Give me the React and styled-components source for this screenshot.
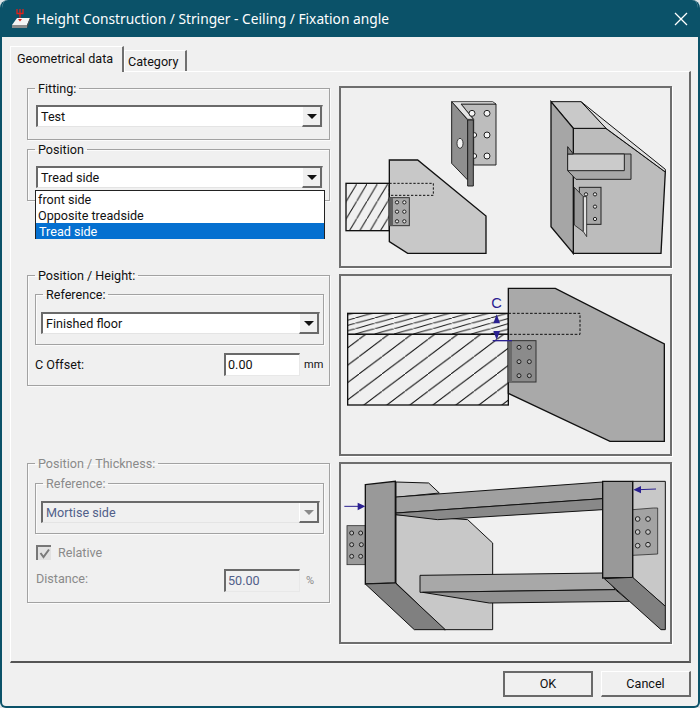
import styled, { createGlobalStyle } from "styled-components";

const GlobalStyle = createGlobalStyle`
  html, body, #root {
    margin: 0;
    padding: 0;
    height: 100%;
    background: #dfe5e8;
  }
  * {
    box-sizing: border-box;
  }
`;

const Window = styled.div`
  width: 700px;
  height: 708px;
  display: flex;
  flex-direction: column;
  background: #f0f0f0;
  border: 2px solid #0b5269;
  border-top: 0;
  border-radius: 8px 8px 6px 6px;
  overflow: hidden;
  font-family: Roboto, "Noto Sans", sans-serif;
  font-size: 12.6px;
  line-height: 18px;
  color: #111;
`;

const TitleBar = styled.div`
  height: 37px;
  margin: 0 -2px;
  padding: 0 12px 0 12px;
  display: flex;
  align-items: center;
  background: #0b5269;
  color: #fff;
  font-family: "Noto Sans", sans-serif;
  font-size: 13.75px;
`;

const TitleText = styled.div`
  margin-left: 6px;
  flex: 1;
`;

const Body = styled.div`
  flex: 1;
  display: flex;
  flex-direction: column;
  padding: 9px 7px 0 8px;
`;

const TabRow = styled.div`
  height: 25px;
  display: flex;
  align-items: flex-end;
`;

const Tab = styled.div`
  height: ${(props) => (props.active ? "26px" : "21px")};
  width: ${(props) => props.w}px;
  margin-bottom: ${(props) => (props.active ? "-1px" : "0")};
  padding: ${(props) => (props.active ? "3px 0 0 6px" : "2px 0 0 3px")};
  background: #f0f0f0;
  border-top: 1px solid #fff;
  border-left: 1px solid #fff;
  border-right: 2px solid #707070;
  white-space: nowrap;
  position: relative;
  z-index: ${(props) => (props.active ? 2 : 1)};
`;

const TabPanel = styled.div`
  height: 592px;
  display: flex;
  gap: 9px;
  padding: 7px 0 0 16px;
  border-top: 1px solid #fff;
  border-left: 1px solid #fff;
  border-right: 2px solid #6a6a6a;
  border-bottom: 2px solid #555;
`;

const LeftColumn = styled.div`
  width: 303px;
  display: flex;
  flex-direction: column;
  position: relative;
`;

const RightColumn = styled.div`
  width: 333px;
  margin-top: 7px;
  display: flex;
  flex-direction: column;
  gap: 6px;
`;

const Group = styled.fieldset`
  margin: ${(props) => props.top || 0}px 0 0 0;
  padding: 0 6px 0 8px;
  min-width: 0;
  height: ${(props) => props.h}px;
  border: 1px solid #a2a2a2;
  box-shadow: inset 1px 1px 0 #fbfbfb, 1px 1px 0 #fbfbfb;
  color: ${(props) => (props.disabled ? "#8a8a8a" : "inherit")};
`;

const InnerGroup = styled(Group)`
  margin: ${(props) => props.top}px -1px 0 -1px;
  padding: 0 3px 0 5px;
`;

const Legend = styled.legend`
  margin-left: ${(props) => (props.inner ? 2 : -1)}px;
  padding: 2px 3px 0;
  line-height: 16px;
  color: inherit;
`;

const Combo = styled.div`
  height: 22px;
  margin-top: ${(props) => props.mt}px;
  display: flex;
  justify-content: space-between;
  background: ${(props) => (props.disabled ? "#f0f0f0" : "#fff")};
  border-top: 2px solid #6a6a6a;
  border-left: 2px solid #6a6a6a;
  border-right: 1px solid #ececec;
  border-bottom: 1px solid #e4e4e4;
  padding-left: 3px;
  color: ${(props) => (props.disabled ? "#51608a" : "#111")};
`;

const ComboText = styled.div`
  line-height: 20px;
`;

const ComboButton = styled.div`
  width: 20px;
  height: 20px;
  display: flex;
  align-items: center;
  justify-content: center;
  background: #f0f0f0;
  border-right: 2px solid #6a6a6a;
  border-bottom: 2px solid #6a6a6a;
  border-left: 1px solid #fff;
`;

const Arrow = styled.div`
  width: 0;
  height: 0;
  border-left: 5px solid transparent;
  border-right: 5px solid transparent;
  border-top: 5px solid ${(props) => (props.disabled ? "#8a8a8a" : "#111")};
`;

const DropList = styled.div`
  position: absolute;
  top: 111px;
  left: 8px;
  width: 290px;
  height: 49px;
  background: #fff;
  border: 1px solid #222;
  z-index: 3;
  line-height: 17px;
`;

const DropItem = styled.div`
  padding-left: ${(props) => (props.selected ? 3 : 2)}px;
  height: 16px;
  background: ${(props) => (props.selected ? "#0570d0" : "transparent")};
  color: ${(props) => (props.selected ? "#fff" : "#111")};
`;

const FieldRow = styled.div`
  margin-top: ${(props) => props.mt}px;
  display: flex;
  align-items: center;
  height: 23px;
`;

const FieldLabel = styled.div`
  flex: none;
  width: ${(props) => props.w}px;
  margin-left: ${(props) => props.ml || 0}px;
  margin-bottom: ${(props) => props.mb || 0}px;
`;

const NumberInput = styled.div`
  flex: none;
  width: 76px;
  height: 23px;
  padding-left: 2px;
  line-height: 20px;
  background: ${(props) => (props.disabled ? "#f0f0f0" : "#fff")};
  border-top: 2px solid #6a6a6a;
  border-left: 2px solid #6a6a6a;
  border-right: 1px solid #e8e8e8;
  border-bottom: 1px solid #e8e8e8;
  color: ${(props) => (props.disabled ? "#51608a" : "#111")};
`;

const Unit = styled.div`
  flex: none;
  margin-left: ${(props) => props.ml}px;
  font-size: 11px;
`;

const CheckRow = styled.div`
  margin-top: 11px;
  display: flex;
  align-items: center;
  gap: 7px;
  height: 15px;
`;

const CheckBox = styled.div`
  width: 15px;
  height: 15px;
  display: flex;
  align-items: center;
  justify-content: center;
  background: #e2e2e2;
  border-top: 2px solid #777;
  border-left: 2px solid #777;
`;

const Picture = styled.div`
  height: 182px;
  background: #f0f0f0;
  border: 2px solid #6e6e6e;
  box-shadow: 1px 1px 0 #fff;
`;

const Drawing = styled.svg`
  display: block;
  width: 100%;
  height: 100%;
`;

const Footer = styled.div`
  flex: 1;
  display: flex;
  justify-content: flex-end;
  gap: 8px;
  padding: 8px 0 0 0;
`;

const Button = styled.div`
  width: 90px;
  height: 26px;
  display: flex;
  align-items: center;
  justify-content: center;
  background: #f0f0f0;
  border-top: ${(props) => (props.primary ? "2px solid #6a6a6a" : "1px solid #fff")};
  border-left: ${(props) => (props.primary ? "2px solid #6a6a6a" : "1px solid #fff")};
  border-right: 2px solid #6a6a6a;
  border-bottom: 2px solid #6a6a6a;
`;

const Hatch = ({ id, gap, rise }) => (
  <pattern id={id} width={gap} height={rise} patternUnits="userSpaceOnUse">
    <line x1={0} y1={rise} x2={gap} y2={0} stroke="#111" strokeWidth="3" />
  </pattern>
);

const Holes = ({ points, fill = "#e6e6e6", r = 6 }) =>
  points.map(([x, y]) => (
    <circle key={`${x}-${y}`} cx={x} cy={y} r={r} fill={fill} stroke="#222" strokeWidth="3" />
  ));

const TitleIcon = () => (
  <svg width="18" height="20" viewBox="0 0 18 20">
    <path d="M0 16 L5 9 H18 L15 16 Z" fill="#f4f4f4" />
    <path d="M0 16 H15 V19 H0 Z" fill="#8c8c8c" />
    <path d="M15 16 L18 9 V12 L15 19 Z" fill="#4e4e4e" />
    <path d="M5 0 V4.5 H11 V0 M8 0 V9" stroke="#e0201a" strokeWidth="1.3" fill="none" />
    <path d="M6 10 H10 L8 12.5 Z" fill="#e0201a" />
  </svg>
);

const CloseIcon = () => (
  <svg width="14" height="14" viewBox="0 0 14 14">
    <path d="M1 1 L13 13 M13 1 L1 13" stroke="#fff" strokeWidth="1.3" />
  </svg>
);

const TopDrawing = () => (
  <Drawing viewBox="15 24 987 534">
    <defs>
      <Hatch id="hatchA" gap={31} rise={52} />
    </defs>

    {/* loose bracket */}
    <path d="M375 72 H480 V255 H413 V118 Z" fill="#bdbdbd" stroke="#222" strokeWidth="3" />
    <Holes points={[[415, 165], [415, 228]]} fill="#f4f4f4" r={7} />
    <path d="M347 65 H470 L480 72 H375 L412 118 H395 Z" fill="#e4e4e4" stroke="#222" strokeWidth="2.5" />
    <path d="M347 65 L395 120 V300 L347 250 Z" fill="#8f8f8f" stroke="#222" strokeWidth="3" />
    <path d="M395 120 H412 V318 H395 Z" fill="#777" stroke="#222" strokeWidth="3" />
    <Holes points={[[408, 100], [453, 100], [453, 165], [453, 228]]} fill="#f4f4f4" r={9} />
    <ellipse cx="372" cy="190" rx="9" ry="15" fill="#f4f4f4" stroke="#222" strokeWidth="2.5" />

    {/* stringer with tread */}
    <path d="M160 240 H245 L450 408 V520 H215 L160 485 Z" fill="#c8c8c8" stroke="#111" strokeWidth="4" />
    <rect x="30" y="310" width="130" height="142" fill="url(#hatchA)" stroke="#111" strokeWidth="4" />
    <rect x="160" y="310" width="132" height="36" fill="none" stroke="#111" strokeWidth="3" strokeDasharray="7 5" />
    <rect x="160" y="353" width="60" height="84" fill="#a9a9a9" stroke="#333" strokeWidth="3" />
    <rect x="160" y="353" width="11" height="84" fill="#5f5f5f" />
    <Holes points={[[183, 367], [205, 367], [183, 395], [205, 395], [183, 424], [205, 424]]} r={5} />

    {/* stringer seen from the side */}
    <path d="M712 145 H810 L988 275 L975 520 H712 Z" fill="#bcbcbc" stroke="#111" strokeWidth="4" />
    <path d="M735 65 L988 268 V276 L810 145 Z" fill="#e0e0e0" stroke="#111" strokeWidth="3" />
    <path d="M645 65 H735 L810 145 H712 Z" fill="#c9c9c9" stroke="#111" strokeWidth="3" />
    <path d="M645 65 L712 145 V520 L645 440 Z" fill="#a6a6a6" stroke="#111" strokeWidth="4" />
    <path d="M695 222 H885 V298 H720 L695 272 Z" fill="#a8a8a8" stroke="#222" strokeWidth="3" />
    <path d="M695 222 H865 V272 H695 Z" fill="#cbcbcb" stroke="#222" strokeWidth="3" />
    <path d="M695 200 L712 222 H695 Z" fill="#8d8d8d" stroke="#222" strokeWidth="3" />
    <rect x="730" y="322" width="65" height="111" fill="#a8a8a8" stroke="#222" strokeWidth="3" />
    <path d="M715 322 L742 350 V455 L715 435 Z" fill="#999" stroke="#222" strokeWidth="2.5" />
    <path d="M742 350 H752 V470 L742 455 Z" fill="#e0e0e0" stroke="#222" strokeWidth="2.5" />
    <Holes points={[[750, 343], [777, 343], [777, 380], [777, 417]]} r={5} />
  </Drawing>
);

const MiddleDrawing = () => (
  <Drawing viewBox="15 18 987 534">
    <defs>
      <Hatch id="hatchB" gap={69} rise={52} />
      <Hatch id="hatchC" gap={58} rise={16} />
    </defs>

    <path d="M517 55 H658 L985 222 V514 H822 L517 370 Z" fill="#a9a9a9" stroke="#111" strokeWidth="4" />

    <rect x="35" y="193" width="482" height="212" fill="url(#hatchB)" stroke="#111" strokeWidth="4" />
    <rect x="35" y="130" width="482" height="63" fill="url(#hatchC)" stroke="#111" strokeWidth="4" />

    <rect x="517" y="130" width="215" height="63" fill="none" stroke="#111" strokeWidth="3" strokeDasharray="8 5" />

    <rect x="517" y="212" width="83" height="124" fill="#8b8b8b" stroke="#333" strokeWidth="3" />
    <rect x="517" y="212" width="11" height="124" fill="#6a6a6a" />
    <Holes points={[[549, 232], [580, 232], [549, 275], [580, 275], [549, 317], [580, 317]]} fill="#a8a8a8" r={6} />

    <path d="M470 212 H528" stroke="#2a2090" strokeWidth="4" />
    <path d="M482 133 L492 160 H472 Z M482 210 L472 183 H492 Z" fill="#2a2090" />
    <text x="482" y="115" textAnchor="middle" fontSize="44" fill="#2a2090" fontFamily="Liberation Sans, sans-serif">C</text>
  </Drawing>
);

const BottomDrawing = () => (
  <Drawing viewBox="15 18 987 534">
    {/* far stringer */}
    <path d="M180 170 L395 185 L470 255 V515 H325 L180 375 Z" fill="#c8c8c8" stroke="#111" strokeWidth="3" />
    <path d="M180 72 L278 75 L310 105 L180 118 Z" fill="#c8c8c8" stroke="#111" strokeWidth="3" />
    <path d="M890 70 H988 V445 L890 360 Z" fill="#c8c8c8" stroke="#111" strokeWidth="3" />

    {/* upper tread */}
    <path d="M180 117 L800 72 V122 L180 165 Z" fill="#a0a0a0" stroke="#111" strokeWidth="3" />
    <path d="M180 165 L800 122 V155 L305 185 L180 170 Z" fill="#898989" stroke="#111" strokeWidth="3" />

    {/* lower tread */}
    <path d="M252 352 L800 345 L838 395 L252 403 Z" fill="#a8a8a8" stroke="#111" strokeWidth="3" />
    <path d="M260 403 L838 395 L880 430 L460 435 Z" fill="#909090" stroke="#111" strokeWidth="3" />

    {/* left column */}
    <rect x="33" y="203" width="55" height="117" fill="#9a9a9a" stroke="#333" strokeWidth="2.5" />
    <Holes points={[[47, 225], [74, 225], [47, 260], [76, 260], [47, 295], [74, 295]]} fill="#b8b8b8" r={6} />
    <path d="M88 80 L178 70 V375 L88 378 Z" fill="#999" stroke="#111" strokeWidth="4" />
    <path d="M88 378 L178 375 L328 515 H235 Z" fill="#808080" stroke="#111" strokeWidth="3" />

    {/* right column */}
    <path d="M890 155 L952 150 H965 V288 L890 292 Z" fill="#a3a3a3" stroke="#333" strokeWidth="2.5" />
    <Holes points={[[905, 183], [936, 183], [905, 222], [936, 222], [905, 263], [936, 260]]} fill="#c4c4c4" r={7} />
    <path d="M800 70 H890 V358 L800 360 Z" fill="#999" stroke="#111" strokeWidth="4" />
    <path d="M805 362 L890 358 L988 445 V515 H975 Z" fill="#808080" stroke="#111" strokeWidth="3" />

    <path d="M25 145 H70 M960 93 L910 95" stroke="#2a2090" strokeWidth="3" />
    <path d="M88 145 L65 134 V157 Z M892 95 L915 84 V106 Z" fill="#2a2090" />
  </Drawing>
);

const Combobox = ({ value, mt, disabled }) => (
  <Combo mt={mt} disabled={disabled}>
    <ComboText>{value}</ComboText>
    <ComboButton>
      <Arrow disabled={disabled} />
    </ComboButton>
  </Combo>
);

const App = () => {
  return (
    <Window>
      <GlobalStyle />
      <TitleBar>
        <TitleIcon />
        <TitleText>Height Construction / Stringer - Ceiling / Fixation angle</TitleText>
        <CloseIcon />
      </TitleBar>

      <Body>
        <TabRow>
          <Tab active w={114}>Geometrical data</Tab>
          <Tab w={63}>Category</Tab>
        </TabRow>

        <TabPanel>
          <LeftColumn>
            <Group h={61}>
              <Legend>Fitting:</Legend>
              <Combobox value="Test" mt={8} />
            </Group>

            <Group h={61}>
              <Legend>Position</Legend>
              <Combobox value="Tread side" mt={8} />
            </Group>

            <DropList>
              <DropItem>front side</DropItem>
              <DropItem>Opposite treadside</DropItem>
              <DropItem selected>Tread side</DropItem>
            </DropList>

            <Group h={120} top={65}>
              <Legend>Position / Height:</Legend>
              <InnerGroup h={60} top={1}>
                <Legend inner>Reference:</Legend>
                <Combobox value="Finished floor" mt={9} />
              </InnerGroup>
              <FieldRow mt={8}>
                <FieldLabel w={189} ml={-1}>C Offset:</FieldLabel>
                <NumberInput>0.00</NumberInput>
                <Unit ml={4}>mm</Unit>
              </FieldRow>
            </Group>

            <Group disabled h={149} top={68}>
              <Legend>Position / Thickness:</Legend>
              <InnerGroup disabled h={60} top={2}>
                <Legend inner>Reference:</Legend>
                <Combobox value="Mortise side" mt={9} disabled />
              </InnerGroup>
              <CheckRow>
                <CheckBox>
                  <svg width="11" height="11" viewBox="0 0 11 11">
                    <path d="M1.5 5 L4.5 9 L10 1.5" fill="none" stroke="#7a7a7a" strokeWidth="2" />
                  </svg>
                </CheckBox>
                Relative
              </CheckRow>
              <FieldRow mt={9}>
                <FieldLabel w={188} mb={3}>Distance:</FieldLabel>
                <NumberInput disabled>50.00</NumberInput>
                <Unit ml={6}>%</Unit>
              </FieldRow>
            </Group>
          </LeftColumn>

          <RightColumn>
            <Picture><TopDrawing /></Picture>
            <Picture><MiddleDrawing /></Picture>
            <Picture><BottomDrawing /></Picture>
          </RightColumn>
        </TabPanel>

        <Footer>
          <Button primary>OK</Button>
          <Button>Cancel</Button>
        </Footer>
      </Body>
    </Window>
  );
};

export default App;
